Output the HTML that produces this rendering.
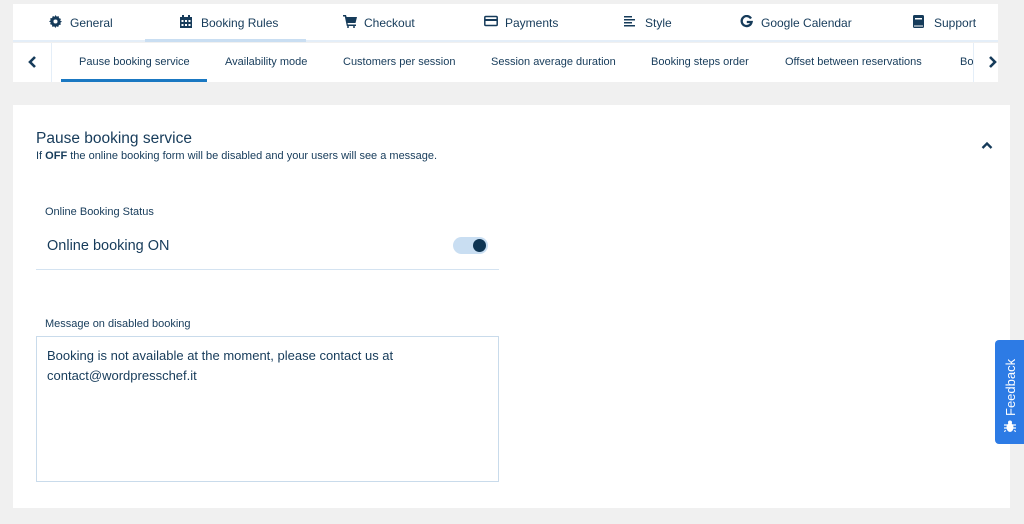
<!DOCTYPE html>
<html><head><style>
*{box-sizing:border-box;margin:0;padding:0}
body{width:1024px;height:524px;background:#f0f0f0;font-family:"Liberation Sans",sans-serif;color:#163b5a;position:relative;overflow:hidden}
.a{position:absolute}
.top{left:13px;top:4px;width:985px;height:38px;background:#fff;border-bottom:2px solid #e4eef8}
.t{position:absolute;top:12px;font-size:12px;white-space:nowrap}
.t svg{position:absolute;left:-21px;top:-1px}
.sub{left:13px;top:43px;width:985px;height:39px;background:#fff}
.s{position:absolute;top:13px;font-size:11px;white-space:nowrap}
.card{left:13px;top:105px;width:997px;height:403px;background:#fff}
</style></head><body>
<div class="a top">
 <div class="a" style="left:132px;top:35px;width:161px;height:3px;background:#c9def2"></div>
 <div class="t" style="left:57px"><svg width="13" height="13" viewBox="0 0 16 16"><path fill="#163b5a" d="M8 0l1.5 2 2.4-.6.4 2.4 2.4.9-.9 2.3L16 8l-2 1.5.6 2.4-2.4.4-.9 2.4-2.3-.9L8 16l-1.5-2-2.4.6-.4-2.4-2.4-.9.9-2.3L0 8l2-1.5-.6-2.4 2.4-.4.9-2.4 2.3.9z"/><circle cx="8" cy="8" r="2.5" fill="#fff"/></svg>General</div>
 <div class="t" style="left:188px"><svg width="12" height="13" viewBox="0 0 12 13"><rect x="0" y="2" width="12" height="11" fill="#163b5a"/><rect x="2" y="0" width="2" height="3" fill="#163b5a"/><rect x="8" y="0" width="2" height="3" fill="#163b5a"/><g fill="#fff"><rect x="1.5" y="5" width="2" height="2"/><rect x="5" y="5" width="2" height="2"/><rect x="8.5" y="5" width="2" height="2"/><rect x="1.5" y="9" width="2" height="2"/><rect x="5" y="9" width="2" height="2"/><rect x="8.5" y="9" width="2" height="2"/></g></svg>Booking Rules</div>
 <div class="t" style="left:351px"><svg width="14" height="13" viewBox="0 0 14 13"><path fill="#163b5a" d="M0 0h3l.6 2H14l-1.5 6H4.5l.4 1.5H13V11H3.8L1.8 1.5H0z"/><circle cx="5" cy="12" r="1" fill="#163b5a"/><circle cx="11" cy="12" r="1" fill="#163b5a"/></svg>Checkout</div>
 <div class="t" style="left:492px"><svg width="14" height="12" viewBox="0 0 14 12"><rect x=".8" y="1.5" width="12.4" height="9" rx="1" fill="none" stroke="#163b5a" stroke-width="1.5"/><rect x="1" y="4" width="12" height="2" fill="#163b5a"/></svg>Payments</div>
 <div class="t" style="left:632px"><svg width="12" height="12" viewBox="0 0 12 12"><g fill="#163b5a"><rect y="1" width="8" height="1.5"/><rect y="4" width="11" height="1.5"/><rect y="7" width="8" height="1.5"/><rect y="10" width="11" height="1.5"/></g></svg>Style</div>
 <div class="t" style="left:748px"><svg width="13" height="13" viewBox="0 0 13 13"><path d="M11 3.5A5 5 0 1 0 11.6 7H6.8" fill="none" stroke="#163b5a" stroke-width="2.3"/></svg>Google Calendar</div>
 <div class="t" style="left:921px"><svg width="11" height="13" viewBox="0 0 11 13"><rect width="11" height="13" rx="1.5" fill="#163b5a"/><rect x="2" y="3" width="7" height="1.5" fill="#fff"/><rect x="1" y="10.5" width="9" height="1" fill="#fff"/></svg>Support</div>
</div>
<div class="a sub">
 <div class="a" style="left:38px;top:0;width:1px;height:39px;background:#e4eef8"></div>
 <div class="a" style="left:960px;top:0;width:1px;height:39px;background:#e4eef8"></div>
 <svg class="a" style="left:15px;top:13px" width="9" height="12" viewBox="0 0 9 12"><path d="M7 1L2 6l5 5" fill="none" stroke="#163b5a" stroke-width="2.6"/></svg>
 <svg class="a" style="left:975px;top:13px" width="9" height="12" viewBox="0 0 9 12"><path d="M2 1l5 5-5 5" fill="none" stroke="#163b5a" stroke-width="2.6"/></svg>
 <div class="a" style="left:48px;top:36px;width:146px;height:3px;background:#1a78c2"></div>
 <div class="s" style="left:66px">Pause booking service</div>
 <div class="s" style="left:212px">Availability mode</div>
 <div class="s" style="left:330px">Customers per session</div>
 <div class="s" style="left:478px">Session average duration</div>
 <div class="s" style="left:638px">Booking steps order</div>
 <div class="s" style="left:772px">Offset between reservations</div>
 <div class="s" style="left:947px;width:13px;overflow:hidden">Bo</div>
</div>
<div class="a card">
 <div class="a" style="left:23px;top:25px;font-size:15.5px">Pause booking service</div>
 <div class="a" style="left:23px;top:45px;font-size:11px">If <b>OFF</b> the online booking form will be disabled and your users will see a message.</div>
 <svg class="a" style="left:968px;top:36px" width="12" height="9" viewBox="0 0 12 9"><path d="M1.5 7L6 2.5 10.5 7" fill="none" stroke="#163b5a" stroke-width="2.3"/></svg>
 <div class="a" style="left:32px;top:101px;font-size:11px">Online Booking Status</div>
 <div class="a" style="left:34px;top:133px;font-size:14.5px">Online booking ON</div>
 <div class="a" style="left:440px;top:132px;width:35px;height:17px;border-radius:9px;background:#c9def2"></div>
 <div class="a" style="left:460px;top:134px;width:13px;height:13px;border-radius:50%;background:#0f3553"></div>
 <div class="a" style="left:23px;top:164px;width:463px;height:1px;background:#d4e3f1"></div>
 <div class="a" style="left:32px;top:213px;font-size:11px">Message on disabled booking</div>
 <div class="a" style="left:23px;top:231px;width:463px;height:146px;border:1px solid #c9dbeb;padding:9px 10px;font-size:13px;line-height:20px">Booking is not available at the moment, please contact us at contact@wordpresschef.it</div>
</div>
<div class="a" style="left:995px;top:340px;width:29px;height:104px;background:#2d7be5;border-radius:4px 0 0 4px">
 <div class="a" style="color:#fff;font-size:13px;transform:rotate(-90deg);transform-origin:0 0;white-space:nowrap;left:8px;top:76px">Feedback</div>
 <svg class="a" style="left:9px;top:80px" width="12" height="13" viewBox="0 0 12 13"><ellipse cx="6" cy="7.5" rx="3.5" ry="4.5" fill="#fff"/><circle cx="6" cy="2.5" r="2" fill="#fff"/><path d="M0 5h12M0 8h12M0 11.5l2-1M12 11.5l-2-1" stroke="#fff" stroke-width="1.2"/></svg>
</div>
</body></html>
